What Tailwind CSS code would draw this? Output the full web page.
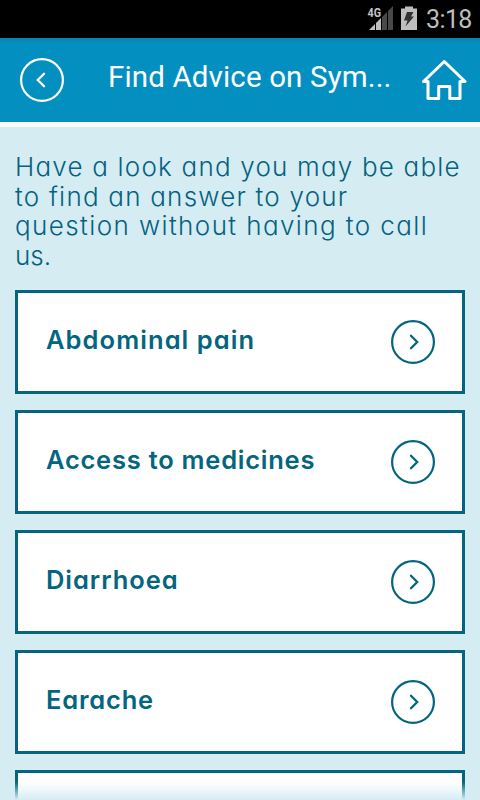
<!DOCTYPE html>
<html lang="en">

<head>
    <meta charset="UTF-8">
    <meta name="viewport" content="width=device-width, initial-scale=1.0">
    <title>Find Advice on Symptoms</title>
    <script src="https://cdn.jsdelivr.net/npm/@tailwindcss/browser@4"></script>
</head>

<body class="bg-[#d6ecf3] font-['Inter',sans-serif] [font-feature-settings:'cv11']">
    <div class="relative flex h-[800px] w-[480px] flex-col overflow-hidden">
        <!-- Status bar -->
        <div class="flex h-[38px] shrink-0 items-start bg-black pl-[367px] font-['Roboto',sans-serif]">
            <svg class="mt-1 h-[28px] w-[28px] shrink-0" viewBox="0 0 28 28">
                <path d="M26 2V26H14.500V13.500Z" fill="#494949" />
                <path d="M14.500 13.500V26H2Z" fill="#bebebe" />
                <path d="M8.500 2V26M14.500 2V26M20.500 2V26" stroke="#000" stroke-width="1" />
                <path d="M0 2H15V14H0Z" fill="#000" />
                <text x="0.500" y="13" fill="#c4c4c4" font-size="13.500" font-weight="700" textLength="13.500"
                    lengthAdjust="spacingAndGlyphs">4G</text>
            </svg>
            <svg class="mt-1 ml-1.5 h-[28px] w-[16px] shrink-0" viewBox="0 0 16 28">
                <path d="M4 2.500H12V4.500H16V26H0V4.500H4Z" fill="#bebebe" />
                <path d="M6 8H12.500L10 12.500H13L4.500 22.500L6.500 16.500H3Z" fill="#333" />
            </svg>
            <span class="ml-[9px] text-[25px] leading-[40px] tracking-[-0.6px] text-[#bebebe]">3:18</span>
        </div>

        <!-- Header -->
        <header class="flex h-[84px] shrink-0 items-center bg-[#0390c1] bg-linear-to-b from-[#0785b1] to-[#0390c1] to-8% pl-5 text-white">
            <svg class="h-11 w-11 shrink-0" viewBox="0 0 44 44" fill="none" stroke="currentColor">
                <circle cx="22" cy="22" r="20.900" stroke-width="2.200" />
                <path d="M24 15.800L17.800 22L24 28.200" stroke-width="2.300" stroke-linecap="round" />
            </svg>
            <h1 class="ml-11 w-[288px] -translate-y-[3px] whitespace-nowrap font-['Roboto',sans-serif] text-[29.500px] leading-9 tracking-[0.14px]">Find Advice on Sym...</h1>
            <svg class="ml-[25px] h-[42px] w-[46px] shrink-0" viewBox="0 0 46 42" fill="none" stroke="currentColor"
                stroke-width="3" stroke-linejoin="round">
                <path d="M7 22.500H2.500L23.300 2.500L44 22.500H39V39.500H28.800V27.500H17.700V39.500H7Z" />
            </svg>
        </header>
        <div class="h-[5px] shrink-0 bg-[#fafdfe]"></div>

        <!-- Content -->
        <main class="flex flex-col px-[15px] pt-[25px]">
            <p class="h-[138px] whitespace-nowrap text-[26px] font-[280] leading-[29.500px] text-[#04627f]">
                <span class="tracking-[1.2px]">Have a look and you may be able</span><br>
                <span class="tracking-[1.22px]">to find an answer to your</span><br>
                <span class="tracking-[1.4px]">question without having to call</span><br>
                <span class="tracking-[0px]">us.</span>
            </p>
            <div id="topic-list" class="flex flex-col gap-4"></div>
        </main>

        <!-- Fade over the end of the list -->
        <div class="absolute inset-x-0 bottom-0 h-[18px] bg-linear-to-b from-[#d6ecf3]/0 to-[#d6ecf3]"></div>
    </div>

    <script>
        const topics = [
            { name: 'Abdominal pain', spacing: 'tracking-[1.07px]' },
            { name: 'Access to medicines', spacing: 'tracking-[0.75px]' },
            { name: 'Diarrhoea', spacing: 'tracking-[0.95px]' },
            { name: 'Earache', spacing: 'tracking-[0.8px]' },
            { name: '', spacing: '' },
        ];

        const createTopic = ({ name, spacing }) => `
            <a class="flex h-[104px] items-center justify-between border-3 border-[#04657f] bg-white pr-[27px] pl-7 text-[#04657f]">
                <span class="-translate-y-[2px] whitespace-nowrap text-[25.500px] font-semibold ${spacing}">${name}</span>
                <svg class="h-11 w-11 shrink-0" viewBox="0 0 44 44" fill="none" stroke="currentColor">
                    <circle cx="22" cy="22" r="20.900" stroke-width="2.200" />
                    <path d="M20 15.800L26.200 22L20 28.200" stroke-width="2.300" stroke-linecap="round" />
                </svg>
            </a>`;

        document.getElementById('topic-list').innerHTML = topics.map(createTopic).join('');
    </script>
</body>

</html>
